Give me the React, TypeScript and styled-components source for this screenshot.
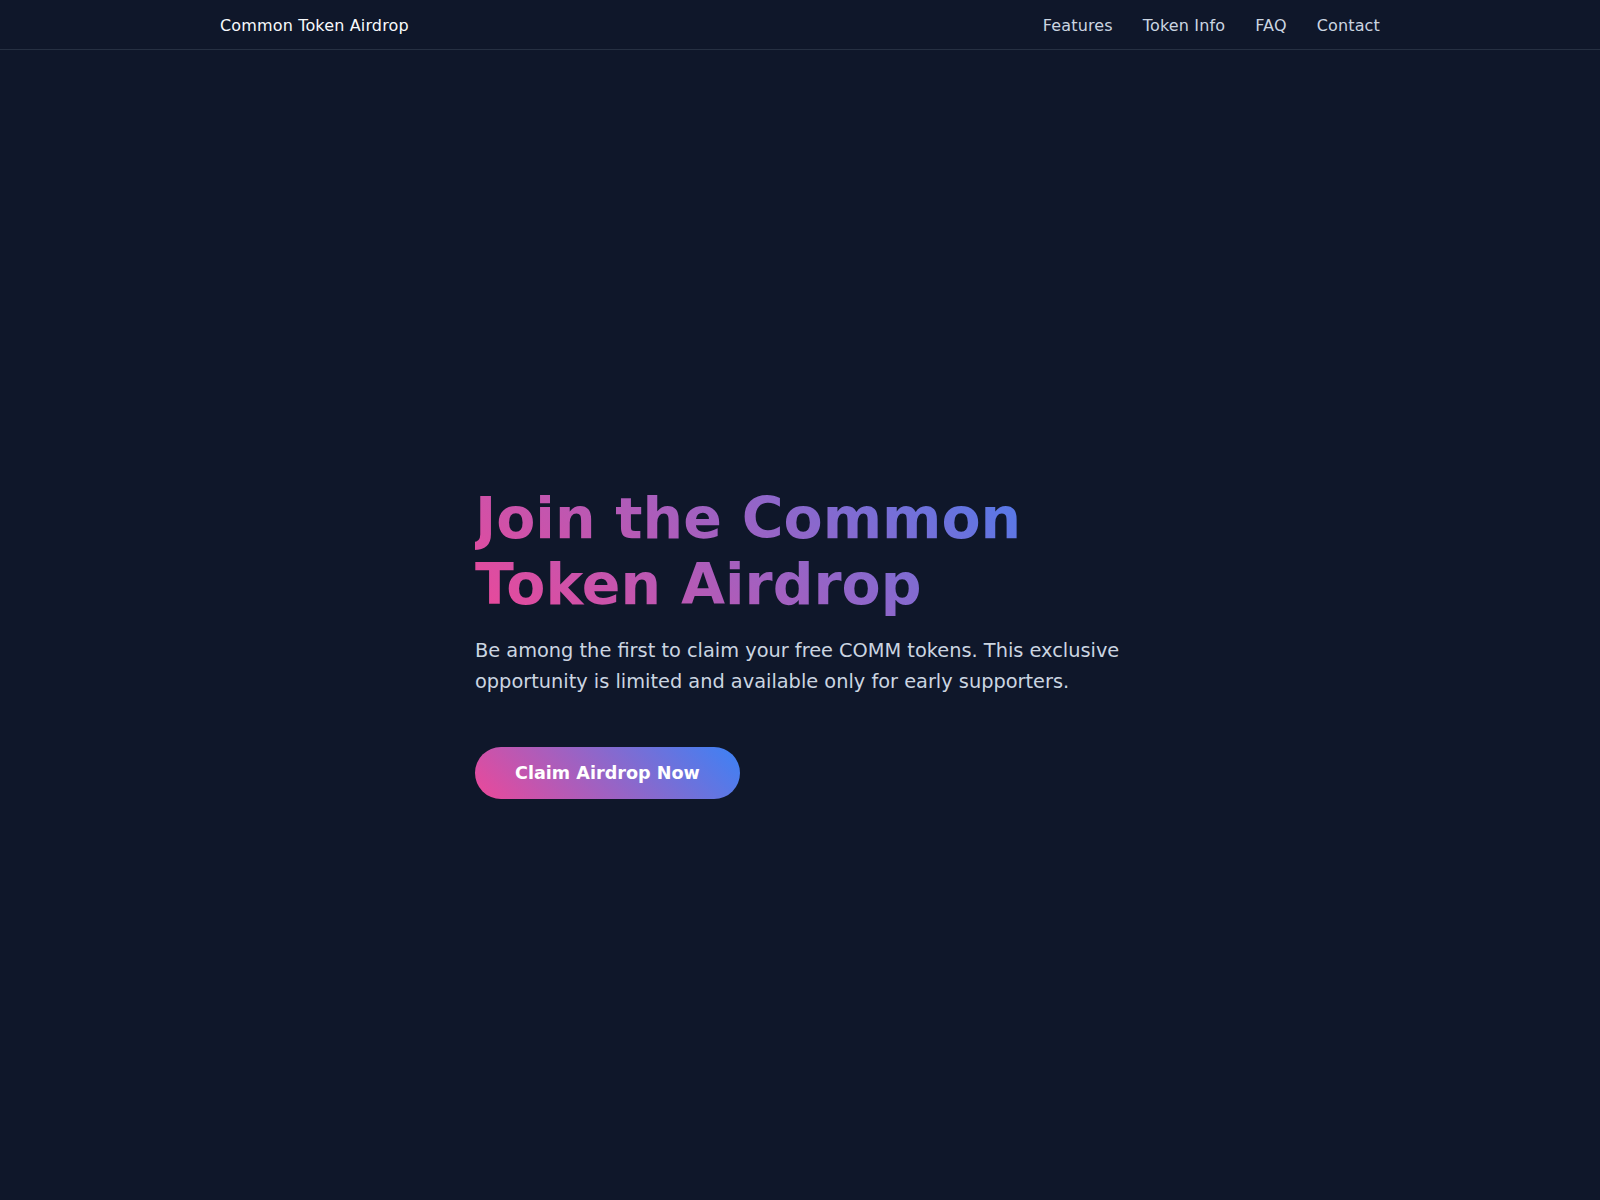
import { createGlobalStyle, styled } from "styled-components"

const GlobalStyle = createGlobalStyle`
  * {
    box-sizing: border-box;
  }
  body {
    margin: 0;
    background: #0f172a;
    color: #f8fafc;
    font-family: "DejaVu Sans", "Noto Sans", sans-serif;
  }
`

const Page = styled.div`
  min-height: 100vh;
  display: flex;
  flex-direction: column;
`

const Header = styled.header`
  border-bottom: 1px solid #263042;
`

const Nav = styled.nav`
  max-width: 1200px;
  margin: 0 auto;
  padding: 2px 20px 0;
  height: 49px;
  display: flex;
  align-items: center;
  justify-content: space-between;
`

const Brand = styled.a`
  font-size: 16px;
  letter-spacing: 0.15px;
  color: #f8fafc;
  text-decoration: none;
`

const Links = styled.div`
  display: flex;
  gap: 30px;
`

const NavLink = styled.a`
  font-size: 16px;
  letter-spacing: 0.15px;
  color: #cbd5e1;
  text-decoration: none;
`

const Hero = styled.section`
  flex: 1;
  display: flex;
  align-items: center;
  justify-content: center;
  padding: 34px 20px 0;
`

const Content = styled.div`
  width: 100%;
  max-width: 650px;
`

const Title = styled.h1`
  margin: 0 0 19px;
  font-size: 57px;
  line-height: 1.16;
  font-weight: 700;
  background: linear-gradient(45deg, #ec4899, #3b82f6);
  -webkit-background-clip: text;
  background-clip: text;
  -webkit-text-fill-color: transparent;
`

const Lead = styled.p`
  margin: 0 0 49px;
  font-size: 19.35px;
  line-height: 30.7px;
  color: #cbd5e1;
`

const ClaimButton = styled.button`
  border: 0;
  border-radius: 999px;
  padding: 15px 40px;
  font-family: inherit;
  font-size: 17.6px;
  line-height: 22px;
  font-weight: 700;
  color: #ffffff;
  background: linear-gradient(45deg, #ec4899, #3b82f6);
  cursor: pointer;
`

export default function App() {
  return (
    <Page>
      <GlobalStyle />
      <Header>
        <Nav>
          <Brand href='#'>Common Token Airdrop</Brand>
          <Links>
            <NavLink href='#features'>Features</NavLink>
            <NavLink href='#token'>Token Info</NavLink>
            <NavLink href='#faq'>FAQ</NavLink>
            <NavLink href='#contact'>Contact</NavLink>
          </Links>
        </Nav>
      </Header>
      <Hero>
        <Content>
          <Title>Join the Common Token Airdrop</Title>
          <Lead>
            Be among the first to claim your free COMM tokens. This exclusive
            opportunity is limited and available only for early supporters.
          </Lead>
          <ClaimButton>Claim Airdrop Now</ClaimButton>
        </Content>
      </Hero>
    </Page>
  )
}
